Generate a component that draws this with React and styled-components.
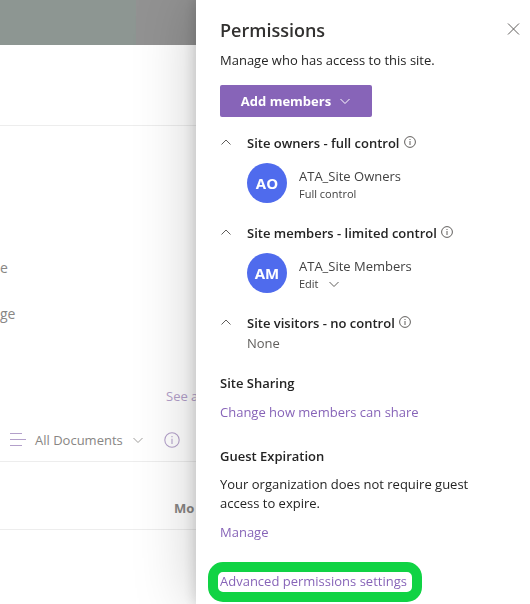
import React from "react";
import styled, { createGlobalStyle } from "styled-components";

const GlobalStyle = createGlobalStyle`
    * {
        box-sizing: border-box;
    }

    body {
        margin: 0;
        overflow: hidden;
        background: #ffffff;
        color: #242424;
        font-family: "Open Sans", "Noto Sans", sans-serif;
        font-size: 13px;
        line-height: 20px;
    }

    h2, h3, p {
        margin: 0;
        font-size: 13px;
        font-weight: 600;
    }

    button {
        padding: 0;
        border: 0;
        background: none;
        color: inherit;
        font: inherit;
        cursor: pointer;
    }
`;

const Site = styled.main`
    min-height: 100vh;
    overflow: hidden;
    color: #888684;
`;

const SiteHeader = styled.header`
    display: flex;
    height: 45px;
    background: #929292;
`;

const HeaderAccent = styled.div`
    width: 136px;
    background: #8d9692;
`;

const CommandArea = styled.div`
    height: 81px;
    border-bottom: 1px solid #ededed;
`;

const Nav = styled.nav`
    display: flex;
    flex-direction: column;
    gap: 26px;
    padding: 132px 0 62px;
`;

const NavLink = styled.a`
    color: inherit;
    font-size: 14px;
    text-decoration: none;
`;

const Link = styled.a`
    color: ${(props) => (props.$dimmed ? "#b3a0ca" : "#8764b8")};
    text-decoration: none;
`;

const SeeAll = styled.div`
    padding-left: 166px;
    margin-bottom: 12px;
`;

const ViewBar = styled.div`
    display: flex;
    align-items: center;
    gap: 20px;
    height: 44px;
    padding-left: 10px;
    border-bottom: 1px solid #ededed;
`;

const ViewButton = styled.button`
    display: flex;
    align-items: center;
    gap: 9px;
`;

const ColumnHeader = styled.div`
    height: 68px;
    padding: 36px 0 0 174px;
    border-bottom: 1px solid #ededed;
    font-weight: 700;
`;

const Panel = styled.aside`
    position: fixed;
    top: 0;
    right: 0;
    bottom: 0;
    width: calc(100% - 196px);
    padding: 16px 10px 0 24px;
    background: #ffffff;
    box-shadow: 0 0 58px rgba(0, 0, 0, 0.22), 0 0 14px rgba(0, 0, 0, 0.18);
    clip-path: inset(0 0 0 -80px);
`;

const PanelHeader = styled.div`
    display: flex;
    align-items: center;
    justify-content: space-between;
    height: 28px;
    margin-bottom: 6px;
`;

const Title = styled.h2`
    color: #323130;
    font-size: 18px;
    line-height: 28px;
`;

const Text = styled.p`
    max-width: 280px;
    font-weight: 400;
    line-height: ${(props) => (props.$tight ? 19 : 20)}px;
`;

const AddButton = styled.button`
    display: flex;
    align-items: center;
    justify-content: center;
    gap: 8px;
    width: 152px;
    height: 32px;
    margin: 15px 0 16px;
    border-radius: 2px;
    background: #8764b8;
    color: #ffffff;
    font-weight: 700;
`;

const Group = styled.section`
    display: grid;
    grid-template-columns: 27px 1fr;
    margin-bottom: 20px;
`;

const Toggle = styled.button`
    display: flex;
    align-items: center;
    height: 20px;
`;

const GroupTitle = styled.h3`
    display: flex;
    gap: 4px;

    svg {
        margin-top: 3px;
    }
`;

const Member = styled.div`
    display: flex;
    gap: 12px;
    margin-top: 10px;
    color: #424242;
`;

const Avatar = styled.div`
    display: flex;
    align-items: center;
    justify-content: center;
    width: 40px;
    height: 40px;
    border-radius: 50%;
    background: #4f6bed;
    color: #ffffff;
    font-size: 15px;
    font-weight: 700;
`;

const MemberInfo = styled.div`
    display: flex;
    flex-direction: column;
    align-items: flex-start;
    padding-top: 3px;
`;

const Role = styled.span`
    font-size: 11px;
    line-height: 16px;
`;

const RoleButton = styled.button`
    display: flex;
    align-items: center;
    gap: 9px;
    font-size: 11px;
    line-height: 16px;
`;

const Empty = styled.p`
    color: #605e5c;
    font-weight: 400;
`;

const Setting = styled.section`
    display: flex;
    flex-direction: column;
    align-items: flex-start;
    gap: 9px;
    margin-bottom: 24px;
`;

const Highlight = styled.div`
    width: fit-content;
    min-width: 214px;
    height: 40px;
    margin: -4px 0 0 -12px;
    padding: 0 2px;
    border: 10px solid #10d344;
    border-radius: 15px;
    line-height: 18px;
    white-space: nowrap;
`;

function Chevron({ up, color = "#605e5c" }) {
    return (
        <svg width="12" height="12" viewBox="0 0 12 12" fill="none" stroke={color}>
            <path d={up ? "M1.5 7.5 6 3l4.5 4.5" : "M1.5 4 6 8.5 10.5 4"} />
        </svg>
    );
}

function InfoIcon({ size = 12, color = "#605e5c" }) {
    return (
        <svg width={size} height={size} viewBox="0 0 12 12" fill="none" stroke={color} strokeWidth={size > 12 ? 0.8 : 1}>
            <circle cx="6" cy="6" r="5.4" />
            <path d="M6 5v4M6 3v1" />
        </svg>
    );
}

function ListIcon() {
    return (
        <svg width="16" height="14" viewBox="0 0 16 14" fill="none" stroke="#b3a0ca">
            <path d="M0 .5h12M0 6.5h16M0 12.5h12" />
        </svg>
    );
}

function CloseIcon() {
    return (
        <svg width="13" height="12" viewBox="0 0 13 12" fill="none" stroke="#605e5c">
            <path d="M1 .5l11 11M12 .5l-11 11" />
        </svg>
    );
}

function PermissionGroup({ title, initials, name, children }) {
    return (
        <Group>
            <Toggle aria-label={title}>
                <Chevron up />
            </Toggle>
            <div>
                <GroupTitle>
                    {title}
                    <InfoIcon />
                </GroupTitle>
                {name ? (
                    <Member>
                        <Avatar>{initials}</Avatar>
                        <MemberInfo>
                            <span>{name}</span>
                            {children}
                        </MemberInfo>
                    </Member>
                ) : (
                    children
                )}
            </div>
        </Group>
    );
}

function App() {
    return (
        <>
            <GlobalStyle />
            <Site>
                <SiteHeader>
                    <HeaderAccent />
                </SiteHeader>
                <CommandArea />
                <Nav>
                    <NavLink href="#">e</NavLink>
                    <NavLink href="#">ge</NavLink>
                </Nav>
                <SeeAll>
                    <Link href="#" $dimmed>See a</Link>
                </SeeAll>
                <ViewBar>
                    <ViewButton>
                        <ListIcon />
                        All Documents
                        <Chevron color="#a19f9d" />
                    </ViewButton>
                    <InfoIcon size={16} color="#b3a0ca" />
                </ViewBar>
                <ColumnHeader>Mo</ColumnHeader>
            </Site>
            <Panel>
                <PanelHeader>
                    <Title>Permissions</Title>
                    <button aria-label="Close">
                        <CloseIcon />
                    </button>
                </PanelHeader>
                <Text>Manage who has access to this site.</Text>
                <AddButton>
                    Add members
                    <Chevron color="#ffffff" />
                </AddButton>
                <PermissionGroup title="Site owners - full control" initials="AO" name="ATA_Site Owners">
                    <Role>Full control</Role>
                </PermissionGroup>
                <PermissionGroup title="Site members - limited control" initials="AM" name="ATA_Site Members">
                    <RoleButton>
                        Edit
                        <Chevron />
                    </RoleButton>
                </PermissionGroup>
                <PermissionGroup title="Site visitors - no control">
                    <Empty>None</Empty>
                </PermissionGroup>
                <Setting>
                    <h3>Site Sharing</h3>
                    <Link href="#">Change how members can share</Link>
                </Setting>
                <Setting>
                    <h3>Guest Expiration</h3>
                    <Text $tight>
                        Your organization does not require guest access to expire.
                    </Text>
                    <Link href="#">Manage</Link>
                </Setting>
                <Highlight>
                    <Link href="#">Advanced permissions settings</Link>
                </Highlight>
            </Panel>
        </>
    );
}

export default App;
